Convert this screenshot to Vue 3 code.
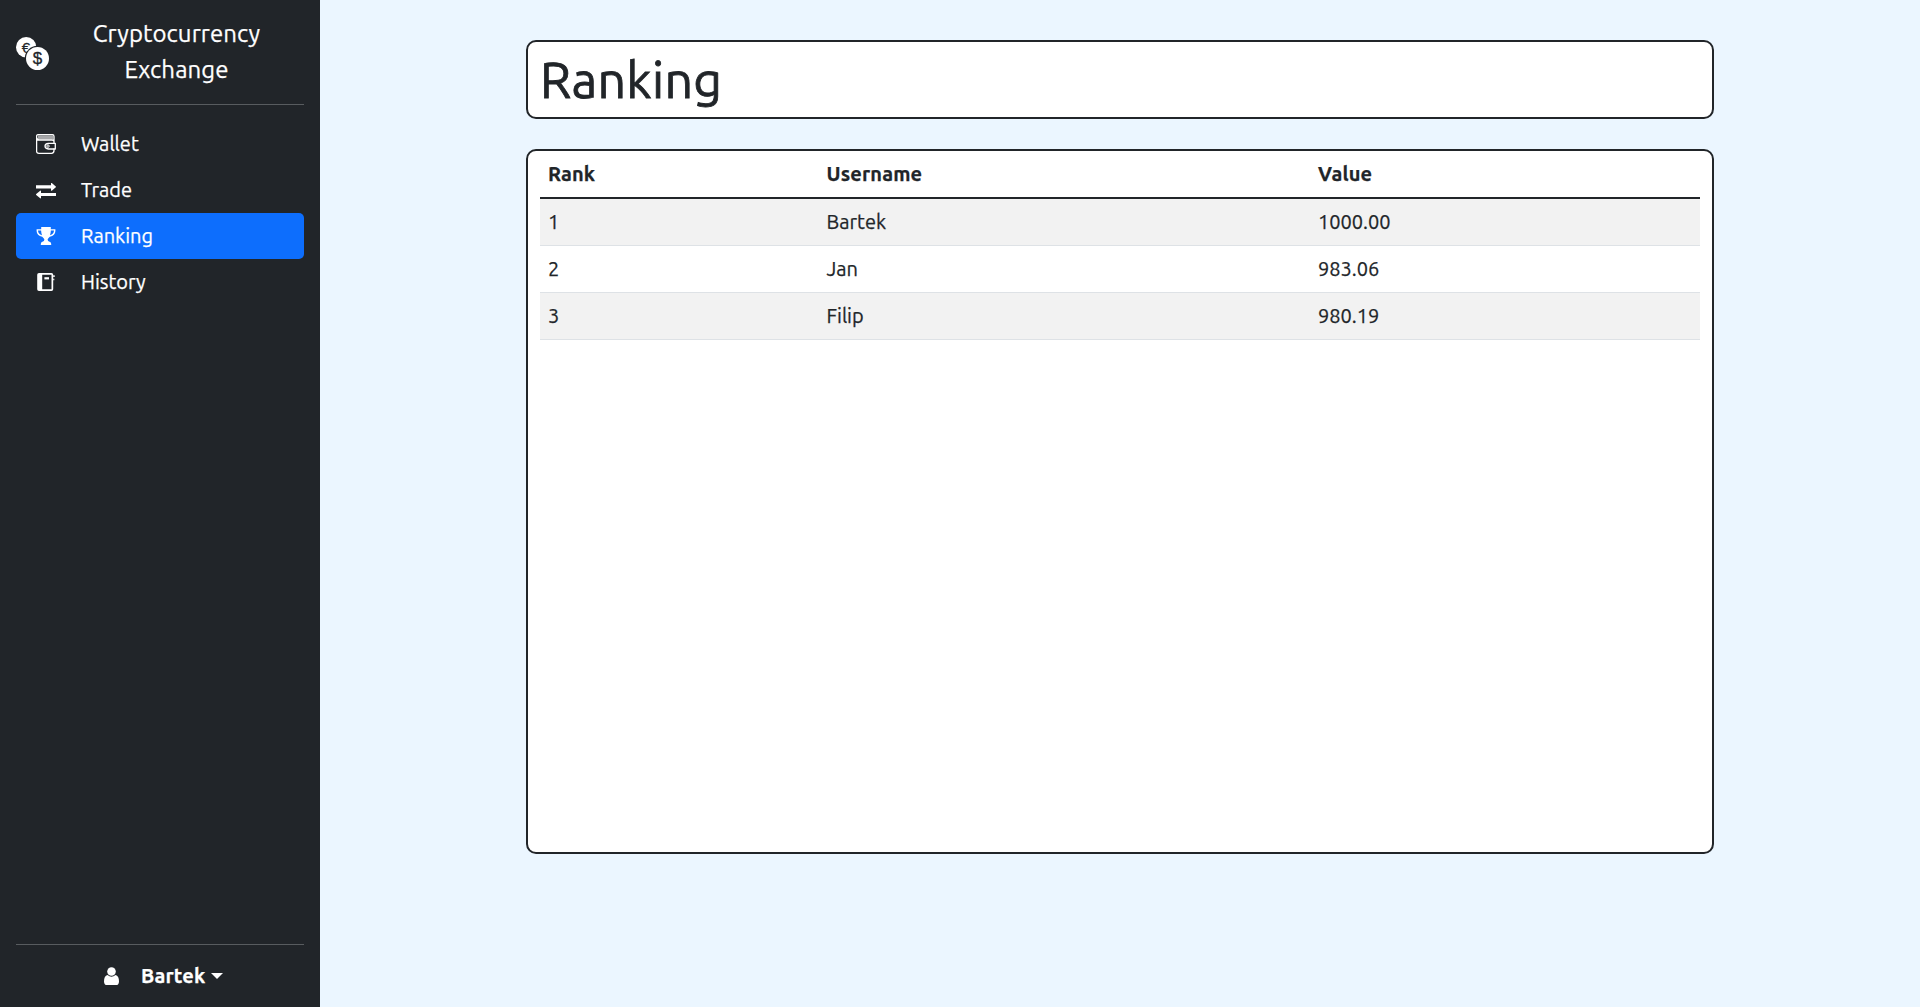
<script setup>
const links = ['Wallet', 'Trade', 'Ranking', 'History']
const active = 'Ranking'
const rows = [
  { name: 'Bartek', value: '1000.00' },
  { name: 'Jan', value: '983.06' },
  { name: 'Filip', value: '980.19' },
]
</script>

<template>
  <div class="layout">
    <aside class="sidebar">
      <div class="brand">
        <svg class="coins" viewBox="0 0 33 33">
          <circle cx="10.2" cy="10.3" r="10.2" fill="#fff" />
          <text x="10" y="16" class="euro">€</text>
          <circle cx="21.5" cy="21.5" r="12.7" fill="#212529" />
          <circle cx="21.5" cy="21.5" r="11.5" fill="#fff" />
          <text x="21.5" y="27.3" class="dollar">$</text>
        </svg>
        <span class="brand-name">Cryptocurrency<br />Exchange</span>
      </div>
      <hr />
      <nav>
        <a v-for="link in links" :key="link" class="link" :class="{ active: link === active }">
          <svg v-if="link === 'Wallet'" viewBox="0 0 20 20" fill="none" stroke="#fff">
            <path d="M2 .7H16.5Q18 .7 18 2.5V9M18 14.5V16.5Q18 19.3 15.5 19.3H3Q.6 19.3 .6 17V2.5Q.6 .7 2 .7M.8 4Q1.2 6 3 6H16Q18 6 18 7.5" stroke-width="1.3" />
            <rect x="2" y="1.4" width="15" height="4.2" fill="#fff" fill-opacity=".6" stroke="none" />
            <path d="M19.3 9.3H12.4Q9 9.6 9 12.1T12.4 15H19.3Z" stroke-width="1.3" stroke-linejoin="round" />
            <circle cx="12" cy="12.1" r="1.2" stroke-width="1" />
          </svg>
          <svg v-else-if="link === 'Trade'" viewBox="0 0 20 20" fill="#fff">
            <path d="M0 4.2H15V2.2Q15.2 1.6 15.8 2L19.8 5.4Q20.2 5.8 19.8 6.2L15.8 9.6Q15.2 9.9 15 9.3V7.3H0ZM20 11.8H5V9.8Q4.8 9.2 4.2 9.6L.2 13Q-.2 13.4 .2 13.8L4.2 17.2Q4.8 17.5 5 16.9V14.9H20Z" transform="translate(0 1.1)" />
          </svg>
          <svg v-else-if="link === 'Ranking'" viewBox="0 0 20 20" fill="#fff">
            <path fill-rule="evenodd" d="M5.2 1H14.8V3.2H19.4V5Q19.2 9.8 13.8 10.7Q12 12.2 11.6 13.6Q11.6 15.3 13.6 15.8Q15.2 16.3 15.2 18V19H4.8V18Q4.8 16.3 6.4 15.8Q8.4 15.3 8.4 13.6Q8 12.2 6.2 10.7Q.8 9.8 .6 5V3.2H5.2ZM2 4.6Q2.2 8.4 6 9.2Q5.2 7 5.1 4.6ZM18 4.6H14.9Q14.8 7 14 9.2Q17.8 8.4 18 4.6Z" />
          </svg>
          <svg v-else viewBox="0 0 20 20" fill="#fff">
            <path fill-rule="evenodd" d="M3 1H15.5Q17.2 1 17.2 2.7V17.3Q17.2 19 15.5 19H3Q1.2 19 1.2 17.3V2.7Q1.2 1 3 1ZM6.2 2.8V17.2H15.5V2.8Z" />
            <path d="M8.4 5.2H13V7.4H8.4Z" />
            <path d="M17.2 3.3H18.7V5H17.2ZM17.2 6.8H18.3V8.2H17.2Z" />
          </svg>
          <span>{{ link }}</span>
        </a>
      </nav>
      <div class="spacer"></div>
      <hr />
      <div class="user">
        <svg viewBox="0 0 15 18" fill="#fff">
          <circle cx="7.5" cy="4.5" r="4.3" />
          <path d="M3.5 8Q7.5 11.3 11.5 8Q15 9 15 14.4Q14.9 18 12 18H3Q.1 18 0 14.4Q0 9 3.5 8Z" />
        </svg>
        <strong>Bartek</strong>
        <i class="caret"></i>
      </div>
    </aside>
    <main>
      <h1 class="card heading"><span>Ranking</span></h1>
      <section class="card board">
        <table>
          <colgroup><col class="rank" /><col class="username" /><col /></colgroup>
          <thead>
            <tr><th>Rank</th><th>Username</th><th>Value</th></tr>
          </thead>
          <tbody>
            <tr v-for="(row, i) in rows" :key="row.name">
              <td>{{ i + 1 }}</td><td>{{ row.name }}</td><td>{{ row.value }}</td>
            </tr>
          </tbody>
        </table>
      </section>
    </main>
  </div>
</template>

<style>
body { margin: 0; background: #ebf6ff; }
</style>

<style scoped>
* { box-sizing: border-box; }
.layout {
  display: flex;
  height: 100vh;
  overflow: hidden;
  font: 400 20px/30px Ubuntu, "Noto Sans", sans-serif;
  -webkit-text-stroke: .25px currentColor;
  color: #212529;
  background: #ebf6ff;
}
.sidebar {
  display: flex;
  flex-direction: column;
  width: 320px;
  padding: 16px;
  background: #212529;
  color: #fff;
}
.brand { display: flex; align-items: center; height: 72px; }
.coins { width: 33px; height: 33px; margin-top: 3px; }
.euro, .dollar { font-family: "Liberation Sans", sans-serif; fill: #212529; text-anchor: middle; stroke: #212529; stroke-width: .3px; }
.euro { font-size: 15px; }
.dollar { font-size: 17px; }
.brand-name { flex: 1; text-align: center; font-size: 24px; line-height: 36px; letter-spacing: .08px; }
hr { width: 100%; height: 1px; margin: 16px 0; border: 0; background: #585c5f; flex: none; }
.link {
  display: flex;
  align-items: center;
  height: 46px;
  padding-left: 20px;
  border-radius: 5px;
}
.link svg { width: 20px; height: 20px; margin-right: 25px; }
.link.active { background: #0d6efd; }
.spacer { flex: 1; }
.user { display: flex; align-items: center; height: 30px; padding-left: 88px; }
.user svg { width: 15px; height: 18px; margin-right: 22px; }
.user strong { letter-spacing: .15px; }
.caret {
  margin-left: 6px;
  border: 6px solid transparent;
  border-top-color: #fff;
  border-bottom: 0;
}
main { flex: 1; padding: 40px 206px 0; }
.card { background: #fff; border: 2px solid #212529; border-radius: 10px; }
.heading {
  display: flex;
  align-items: center;
  height: 79px;
  margin: 0 0 30px;
  padding: 0 12px 2px;
  font-size: 50px;
  line-height: 60px;
  font-weight: 400;
  letter-spacing: .35px;
  -webkit-text-stroke: .8px currentColor;
}
.board { height: 705px; padding: 0 12px; }
table { width: 100%; table-layout: fixed; border-collapse: separate; border-spacing: 0; }
.rank { width: 278.5px; }
.username { width: 491.5px; }
th, td { height: 47px; padding: 8px; text-align: left; border-bottom: 1px solid #dee2e6; }
th { height: 48px; border-bottom: 2px solid #212529; letter-spacing: .15px; }
tbody tr:nth-child(odd) { background: #f2f2f2; }
</style>
